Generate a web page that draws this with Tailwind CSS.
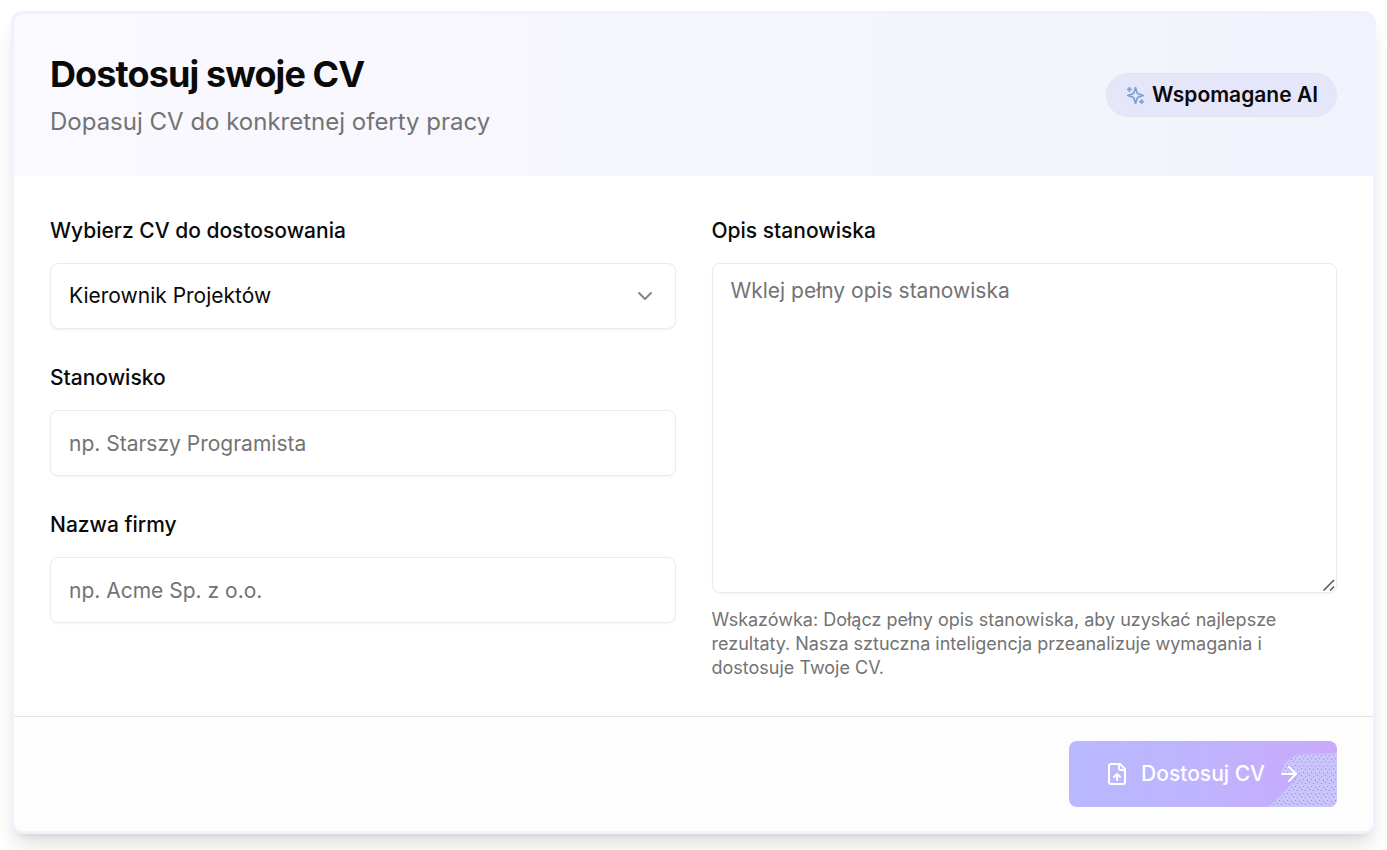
<!DOCTYPE html>
<html lang="pl">
<head>
<meta charset="utf-8">
<meta name="viewport" content="width=device-width, initial-scale=1">
<title>Dostosuj swoje CV</title>
<script src="https://cdn.jsdelivr.net/npm/@tailwindcss/browser@4"></script>
</head>
<body class="bg-white p-[11px] pb-4 font-['Inter',sans-serif] text-[21px] text-[#0a0a0a]">
<main class="overflow-hidden rounded-xl border-3 border-[#f1f1fd] bg-white shadow-[0_15px_22px_-4px_rgba(0,0,0,0.12),0_6px_9px_-6px_rgba(0,0,0,0.12)]">
  <header class="flex items-center justify-between bg-linear-to-r from-[#faf9ff] via-[#f6f6fd] to-[#f2f2fc] p-9">
    <div class="flex flex-col gap-1.5">
      <h1 class="text-4xl leading-12 font-bold tracking-tight">Dostosuj swoje CV</h1>
      <p class="text-2xl leading-9 text-[#737373]">Dopasuj CV do konkretnej oferty pracy</p>
    </div>
    <div class="flex items-center gap-1.5 rounded-full border border-[#e5e5e8] bg-[#e6e6fb] px-[18px] py-1.5 leading-[30px] font-semibold">
      <svg class="size-[21px] text-[#7aa2dd]" viewBox="0 0 24 24" fill="none" stroke="currentColor" stroke-width="2" stroke-linecap="round" stroke-linejoin="round" aria-hidden="true"><path d="m12 3-1.9 5.8a2 2 0 0 1-1.3 1.3L3 12l5.8 1.9a2 2 0 0 1 1.3 1.3L12 21l1.9-5.8a2 2 0 0 1 1.3-1.3L21 12l-5.8-1.9a2 2 0 0 1-1.3-1.3Z"/><path d="M5 3v4M19 17v4M3 5h4M17 19h4"/></svg>
      <span>Wspomagane AI</span>
    </div>
  </header>
  <form>
    <div class="grid grid-cols-2 gap-9 p-9">
      <div class="flex flex-col gap-[30px]">
        <div class="flex flex-col gap-3.5">
          <label for="cv" class="leading-[37px] font-medium">Wybierz CV do dostosowania</label>
          <div class="relative">
            <select id="cv" class="block h-[66px] w-full appearance-none rounded-lg border border-[#ebebeb] bg-white px-[18px] shadow-xs"><option>Kierownik Projektów</option></select>
            <svg class="pointer-events-none absolute top-[21px] right-[19px] size-6 text-[#858585]" viewBox="0 0 24 24" fill="none" stroke="currentColor" stroke-width="2" stroke-linecap="round" stroke-linejoin="round" aria-hidden="true"><path d="m6 9 6 6 6-6"/></svg>
          </div>
        </div>
        <div class="flex flex-col gap-3.5">
          <label for="role" class="leading-[37px] font-medium">Stanowisko</label>
          <input id="role" type="text" placeholder="np. Starszy Programista" class="h-[66px] w-full rounded-lg border border-[#ebebeb] px-[18px] shadow-xs placeholder:text-[#737373]">
        </div>
        <div class="flex flex-col gap-3.5">
          <label for="company" class="leading-[37px] font-medium">Nazwa firmy</label>
          <input id="company" type="text" placeholder="np. Acme Sp. z o.o." class="h-[66px] w-full rounded-lg border border-[#ebebeb] px-[18px] shadow-xs placeholder:text-[#737373]">
        </div>
      </div>
      <div class="flex flex-col">
        <label for="description" class="mb-3.5 leading-[37px] font-medium">Opis stanowiska</label>
        <div class="relative">
          <textarea id="description" placeholder="Wklej pełny opis stanowiska" class="block h-[330px] w-full resize-y rounded-lg border border-[#ebebeb] px-[18px] py-3 leading-[30px] shadow-xs placeholder:text-[#737373] [&::-webkit-resizer]:bg-transparent"></textarea>
          <svg class="pointer-events-none absolute right-0.5 bottom-0.5 size-3 text-[#555]" viewBox="0 0 12 12" fill="none" stroke="currentColor" stroke-width="1.5" aria-hidden="true"><path d="M.5 11.5 11 1M7 11.5 11 7.500"/></svg>
        </div>
        <p class="mt-[15px] text-lg leading-6 text-[#737373]">Wskazówka: Dołącz pełny opis stanowiska, aby uzyskać najlepsze rezultaty. Nasza sztuczna inteligencja przeanalizuje wymagania i dostosuje Twoje CV.</p>
      </div>
    </div>
    <footer class="flex justify-end border-t border-[#e5e5e5] bg-[#fdfdfd] px-9 py-6">
      <button type="button" class="relative flex h-[66px] items-center gap-3 overflow-hidden rounded-lg bg-linear-to-r from-[#b9b8ff] via-[#bfb4fe] to-[#c9a9fb] px-9 font-medium text-white">
        <svg class="absolute right-0 bottom-0 h-[54px] w-[69px]" viewBox="0 0 69 54" aria-hidden="true"><defs><pattern id="dots" width="8" height="7" patternUnits="userSpaceOnUse"><path fill="#6fa3d3" d="M1 1h1v1h-1zM5 2h1v1h-1zM3 5h1v1h-1zM7 6h1v1h-1z"/></pattern></defs><path fill="#c9c4fb" d="M0 54 15 40 31 22 13 20 17 10 29 1 69 0V54Z"/><path fill="url(#dots)" d="M0 54 15 40 31 22 13 20 17 10 29 1 69 0V54Z"/></svg>
        <svg class="relative size-6" viewBox="0 0 24 24" fill="none" stroke="currentColor" stroke-width="2" stroke-linecap="round" stroke-linejoin="round" aria-hidden="true"><path d="M15 2H6a2 2 0 0 0-2 2v16a2 2 0 0 0 2 2h12a2 2 0 0 0 2-2V7Z"/><path d="M14 2v4a2 2 0 0 0 2 2h4M12 12v6M15 15l-3-3-3 3"/></svg>
        <span class="relative">Dostosuj CV</span>
        <svg class="relative size-6" viewBox="0 0 24 24" fill="none" stroke="currentColor" stroke-width="2" stroke-linecap="round" stroke-linejoin="round" aria-hidden="true"><path d="M5 12h14M12 5l7 7-7 7"/></svg>
      </button>
    </footer>
  </form>
</main>
</body>
</html>
